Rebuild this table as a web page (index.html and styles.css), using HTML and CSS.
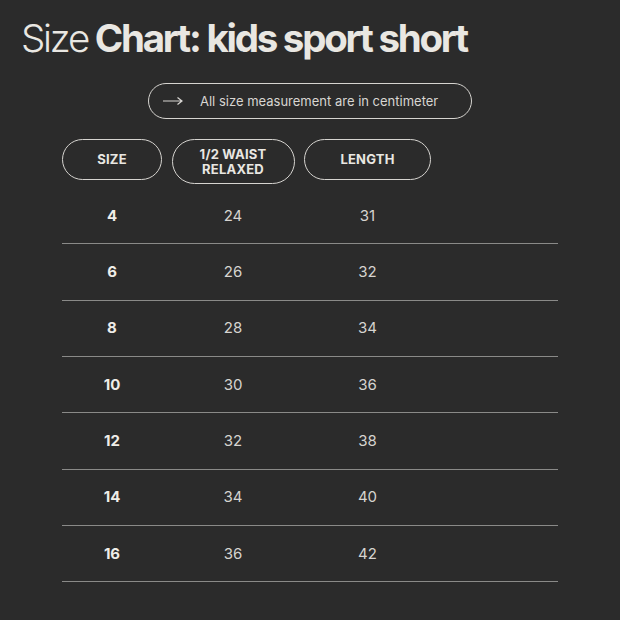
FILE: index.html
```html
<!DOCTYPE html>
<html>
<head>
<meta charset="utf-8">
<link rel="stylesheet" href="styles.css">
</head>
<body>
<div class="page">
  <h1 class="title"><span class="light">Size</span> Chart: kids sport short</h1>
  <div class="note-wrap">
    <div class="note">
      <svg class="arrow" width="22" height="10" viewBox="0 0 22 10"><path d="M1 5H20M15.5 1.5L20 5L15.5 8.5" fill="none" stroke="#d8d6d2" stroke-width="1.2"/></svg>
      <span>All size measurement are in centimeter</span>
    </div>
  </div>
  <div class="table">
    <div class="head">
      <div class="pill p1">SIZE</div>
      <div class="pill p2">1/2 WAIST<br>RELAXED</div>
      <div class="pill p3">LENGTH</div>
    </div>
    <div class="row"><div class="c size">4</div><div class="c">24</div><div class="c">31</div></div>
    <div class="row"><div class="c size">6</div><div class="c">26</div><div class="c">32</div></div>
    <div class="row"><div class="c size">8</div><div class="c">28</div><div class="c">34</div></div>
    <div class="row"><div class="c size">10</div><div class="c">30</div><div class="c">36</div></div>
    <div class="row"><div class="c size">12</div><div class="c">32</div><div class="c">38</div></div>
    <div class="row"><div class="c size">14</div><div class="c">34</div><div class="c">40</div></div>
    <div class="row"><div class="c size">16</div><div class="c">36</div><div class="c">42</div></div>
  </div>
</div>
</body>
</html>
```
FILE: styles.css
```css
html, body {
  margin: 0;
  padding: 0;
  background: #2b2b2b;
}
body {
  width: 620px;
  height: 620px;
  overflow: hidden;
  font-family: Inter, "Noto Sans", sans-serif;
  color: #e9e7e2;
}
.page {
  padding-top: 19px;
}
.title {
  margin: 0 0 0 21px;
  font-size: 38.5px;
  line-height: 39px;
  font-weight: 700;
  letter-spacing: -2.25px;
  color: #e9e7e2;
}
.light {
  font-weight: 300;
}
.note-wrap {
  display: flex;
  justify-content: center;
  margin-top: 25px;
}
.note {
  box-sizing: border-box;
  width: 324px;
  height: 36px;
  border: 1.5px solid #d6d4d0;
  border-radius: 18px;
  display: flex;
  align-items: center;
  padding-left: 13px;
  gap: 16px;
  font-size: 13px;
  color: #d8d6d2;
}
.table {
  margin: 20px 0 0 62px;
  width: 496px;
}
.head {
  display: flex;
  align-items: flex-start;
  gap: 9.5px;
  margin-bottom: 4px;
}
.pill {
  box-sizing: border-box;
  border: 1.5px solid #d6d4d0;
  border-radius: 23px;
  display: flex;
  align-items: center;
  justify-content: center;
  text-align: center;
  font-size: 13px;
  font-weight: 700;
  line-height: 15px;
  letter-spacing: 0.2px;
  color: #e9e7e2;
}
.p1 { width: 100px; height: 41px; }
.p2 { width: 123px; height: 45px; }
.p3 { width: 127px; height: 41px; }
.row {
  box-sizing: border-box;
  height: 56.33px;
  border-bottom: 1.5px solid #8a8a88;
  display: flex;
  gap: 9.5px;
  align-items: center;
}
.c {
  text-align: center;
  font-size: 15px;
  color: #d6d4d0;
  padding-bottom: 1px;
}
.c:nth-child(1) { width: 100px; }
.c:nth-child(2) { width: 123px; }
.c:nth-child(3) { width: 127px; }
.size {
  font-weight: 700;
  color: #efede8;
}
```
